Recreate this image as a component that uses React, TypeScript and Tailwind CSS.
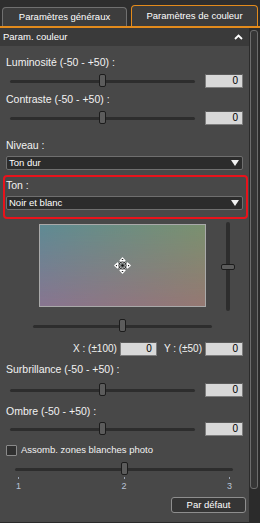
import React from "react";

const font = { fontFamily: '"Liberation Sans", Arial, sans-serif' };

function Thumb({ className }: { className: string }) {
  return (
    <div
      className={`absolute w-[7px] h-[13px] rounded-[2px] bg-[#5c5c5c] border border-[#1c1c1c] ${className}`}
    />
  );
}

function ValueBox({ w = "w-[38px]" }: { w?: string }) {
  return (
    <div
      className={`${w} h-[14px] bg-[#d8d8d8] border border-[#7d7d7d] border-t-[#5a5a5a] flex items-center justify-end pr-[4px] text-[10px] text-black leading-none`}
    >
      0
    </div>
  );
}

function SliderRow({ thumbLeft = "left-[89px]" }: { thumbLeft?: string }) {
  return (
    <div className="flex items-center h-[14px] pl-[10px]">
      <div className="relative w-[185px] h-[3px] bg-[#2d2d2d] rounded-full">
        <Thumb className={`${thumbLeft} -top-[6px]`} />
      </div>
      <div className="ml-[10px]">
        <ValueBox />
      </div>
    </div>
  );
}

function Label({ children, className = "" }: { children: React.ReactNode; className?: string }) {
  return (
    <div className={`h-[14px] leading-[14px] text-[10.5px] text-[#f2f2f2] pl-[6px] ${className}`}>
      {children}
    </div>
  );
}

function Select({ value }: { value: string }) {
  return (
    <div className="h-[14px] w-[237px] ml-[6px] bg-[#2c2c2c] border border-[#6f6f6f] rounded-[2px] flex items-center justify-between pl-[2px] pr-[3px] text-[9.5px] text-white leading-none">
      <span>{value}</span>
      <svg width="8" height="6" viewBox="0 0 8 6">
        <path d="M0 0 H8 L4 6 Z" fill="#f2f2f2" />
      </svg>
    </div>
  );
}

function ColorPad() {
  return (
    <div className="relative w-[167px] h-[83px] border border-[#a9a9a9] flex items-center justify-center">
      <svg className="absolute inset-0" width="165" height="81" viewBox="0 0 165 81" preserveAspectRatio="none">
        <defs>
          <linearGradient id="top" x1="0" y1="0" x2="1" y2="0">
            <stop offset="0" stopColor="#5f8b94" />
            <stop offset="1" stopColor="#7b916f" />
          </linearGradient>
          <linearGradient id="bot" x1="0" y1="0" x2="1" y2="0">
            <stop offset="0" stopColor="#887590" />
            <stop offset="1" stopColor="#957872" />
          </linearGradient>
          <linearGradient id="fade" x1="0" y1="0" x2="0" y2="1">
            <stop offset="0" stopColor="#000" />
            <stop offset="1" stopColor="#fff" />
          </linearGradient>
          <mask id="m">
            <rect width="165" height="81" fill="url(#fade)" />
          </mask>
        </defs>
        <rect width="165" height="81" fill="url(#top)" />
        <rect width="165" height="81" fill="url(#bot)" mask="url(#m)" />
      </svg>
      <svg className="relative" width="17" height="17" viewBox="0 0 17 17">
        <g stroke="#fff" strokeWidth="1.2" strokeLinejoin="round">
          <path d="M8.5 0.8 L11 3.6 H6 Z" fill="#111" />
          <path d="M8.5 16.2 L11 13.4 H6 Z" fill="#111" />
          <path d="M0.8 8.5 L3.6 6 V11 Z" fill="#111" />
          <path d="M16.2 8.5 L13.4 6 V11 Z" fill="#111" />
        </g>
        <circle cx="8.5" cy="8.5" r="3.6" fill="none" stroke="#fff" strokeWidth="1.6" />
        <circle cx="8.5" cy="8.5" r="3.6" fill="none" stroke="#111" strokeWidth="0.9" />
        <circle cx="8.5" cy="8.5" r="1.2" fill="#111" />
      </svg>
    </div>
  );
}

export default function App() {
  return (
    <div style={font} className="w-[260px] h-[523px] bg-[#2e2e2e] flex flex-col overflow-hidden">
      {/* tabs */}
      <div className="h-[26px] flex items-end pl-[2px] gap-[4px]">
        <div className="w-[125px] h-[19px] rounded-t-[4px] border border-b-0 border-[#707070] bg-[#3d3d3d] flex items-center justify-center text-[9.5px] text-white">
          Paramètres généraux
        </div>
        <div className="w-[127px] h-[21px] rounded-t-[4px] border-[1.5px] border-b-0 border-[#e38b1c] bg-[#3c3c3c] flex items-center justify-center text-[9.5px] text-white">
          Paramètres de couleur
        </div>
      </div>
      <div className="h-[2px] bg-[#e38b1c]" />

      <div className="flex flex-1 min-h-0">
        <div className="w-[249px] flex flex-col bg-[#484848] border-b border-[#2a2a2a]">
          {/* header */}
          <div className="h-[18px] bg-[#3a3a3a] flex items-center justify-between pl-[3px] pr-[6px] text-[9.5px] text-white">
            <span>Param. couleur</span>
            <svg width="9" height="6" viewBox="0 0 9 6">
              <path d="M1 5 L4.5 1.5 L8 5" fill="none" stroke="#fff" strokeWidth="1.8" />
            </svg>
          </div>

          <Label className="mt-[9px]">Luminosité (-50 - +50) :</Label>
          <div className="mt-[5px]">
            <SliderRow />
          </div>
          <Label className="mt-[4px]">Contraste (-50 - +50) :</Label>
          <div className="mt-[5px]">
            <SliderRow />
          </div>

          <Label className="mt-[13px]">Niveau :</Label>
          <div className="mt-[4px]">
            <Select value="Ton dur" />
          </div>

          <div className="mt-[5px] ml-[3px] w-[245px] border-2 border-[#e8121b] rounded-[4px] pt-[1px] pb-[7px]">
            <div className="-ml-[5px]">
              <Label>Ton :</Label>
              <div className="mt-[4px]">
                <Select value="Noir et blanc" />
              </div>
            </div>
          </div>

          {/* colour pad */}
          <div className="mt-[3px] flex items-start pl-[39px]">
            <div className="mt-[2px]">
              <ColorPad />
            </div>
            <div className="relative ml-[20px] w-[4px] h-[89px] bg-[#2d2d2d] rounded-full">
              <div className="absolute -left-[5px] top-[42px] w-[14px] h-[6px] rounded-[2px] bg-[#5c5c5c] border border-[#1c1c1c]" />
            </div>
          </div>
          <div className="mt-[8px] h-[14px] flex items-center pl-[33px]">
            <div className="relative w-[179px] h-[3px] bg-[#2d2d2d] rounded-full">
              <Thumb className="left-[86px] -top-[6px]" />
            </div>
          </div>

          <div className="mt-[8px] flex items-center justify-end pr-[6px] text-[10px] text-[#f2f2f2]">
            <span>X : (±100)</span>
            <div className="ml-[3px]">
              <ValueBox w="w-[37px]" />
            </div>
            <span className="ml-[7px]">Y : (±50)</span>
            <div className="ml-[3px]">
              <ValueBox />
            </div>
          </div>

          <Label className="mt-[6px]">Surbrillance (-50 - +50) :</Label>
          <div className="mt-[7px]">
            <SliderRow />
          </div>
          <Label className="mt-[7px]">Ombre (-50 - +50) :</Label>
          <div className="mt-[4px]">
            <SliderRow />
          </div>

          <div className="mt-[7px] h-[14px] flex items-center pl-[6px] gap-[4px] text-[9.5px] text-[#f2f2f2]">
            <div className="w-[11px] h-[11px] bg-[#303030] border border-[#8a8a8a] rounded-[1px]" />
            <span>Assomb. zones blanches photo</span>
          </div>

          <div className="mt-[5px] ml-[15px] w-[218px]">
            <div className="h-[14px] flex items-center">
              <div className="relative w-full h-[3px] bg-[#2d2d2d] rounded-full">
                <Thumb className="left-[106px] -top-[6px]" />
              </div>
            </div>
            <div className="flex justify-between px-[3px] mt-[1px]">
              <div className="w-px h-[2px] bg-[#9aa4b4]" />
              <div className="w-px h-[2px] bg-[#9aa4b4]" />
              <div className="w-px h-[2px] bg-[#9aa4b4]" />
            </div>
            <div className="flex justify-between px-[1px] mt-[2px] text-[9px] leading-[11px] text-[#b9c4d6]">
              <span>1</span>
              <span>2</span>
              <span>3</span>
            </div>
          </div>

          <div className="mt-[5px] ml-auto mr-[3px] w-[75px] h-[16px] border border-[#8e8e8e] rounded-[3px] bg-[#353535] flex items-center justify-center text-[9.5px] text-white">
            Par défaut
          </div>
        </div>

        {/* scrollbar */}
        <div className="w-[11px] bg-[#2b2b2b] pt-[2px] pl-[1px]">
          <div className="w-[8px] h-[459px] border border-[#6c6c6c] rounded-[3px] bg-[#363636]" />
        </div>
      </div>
    </div>
  );
}
